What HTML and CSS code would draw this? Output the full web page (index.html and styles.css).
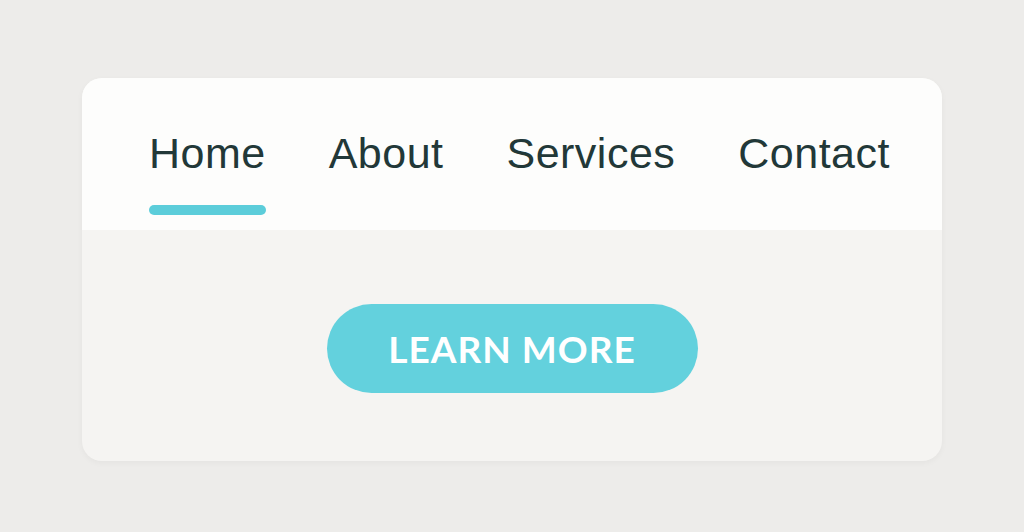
FILE: index.html
```html
<!DOCTYPE html>
<html lang="en">
<head>
<meta charset="utf-8">
<title>Nav card</title>
<link rel="stylesheet" href="styles.css">
</head>
<body>
<main class="page">
  <section class="card">
    <nav class="nav">
      <a class="nav-link active" href="#"><span class="nav-text">Home</span><span class="nav-bar"></span></a>
      <a class="nav-link" href="#"><span class="nav-text">About</span><span class="nav-bar"></span></a>
      <a class="nav-link" href="#"><span class="nav-text">Services</span><span class="nav-bar"></span></a>
      <a class="nav-link" href="#"><span class="nav-text">Contact</span><span class="nav-bar"></span></a>
    </nav>
    <div class="body">
      <button class="cta" type="button">LEARN MORE</button>
    </div>
  </section>
</main>
</body>
</html>
```

FILE: styles.css
```css
html, body {
  margin: 0;
  padding: 0;
}
body {
  background: #edecea;
  width: 1024px;
  height: 532px;
  overflow: hidden;
  font-family: "Liberation Sans", Arial, sans-serif;
}
.page {
  display: flex;
  justify-content: center;
  padding-top: 78px;
}
.card {
  width: 860px;
  height: 383px;
  border-radius: 20px;
  background: #f5f4f2;
  overflow: hidden;
  box-shadow: 0 2px 6px rgba(0, 0, 0, 0.04);
  display: flex;
  flex-direction: column;
}
.nav {
  background: #fdfdfc;
  height: 152px;
  box-sizing: border-box;
  padding: 54px 52px 0 67px;
  display: flex;
  justify-content: space-between;
  align-items: flex-start;
}
.nav-link {
  display: flex;
  flex-direction: column;
  text-decoration: none;
  color: #223838;
}
.nav-text {
  font-size: 43px;
  line-height: 43px;
  letter-spacing: 0.5px;
}
.nav-bar {
  margin-top: 30px;
  height: 10px;
  border-radius: 5px;
  background: transparent;
}
.nav-link.active .nav-bar {
  background: #5ccdda;
}
.body {
  flex: 1;
  display: flex;
  justify-content: center;
  align-items: flex-start;
  padding-top: 74px;
}
.cta {
  width: 371px;
  height: 89px;
  border: none;
  border-radius: 45px;
  background: #63d1dd;
  color: #ffffff;
  font-family: Lato, "Liberation Sans", Arial, sans-serif;
  font-weight: 700;
  font-size: 37px;
  letter-spacing: 1px;
  padding: 0;
  cursor: pointer;
}
```
